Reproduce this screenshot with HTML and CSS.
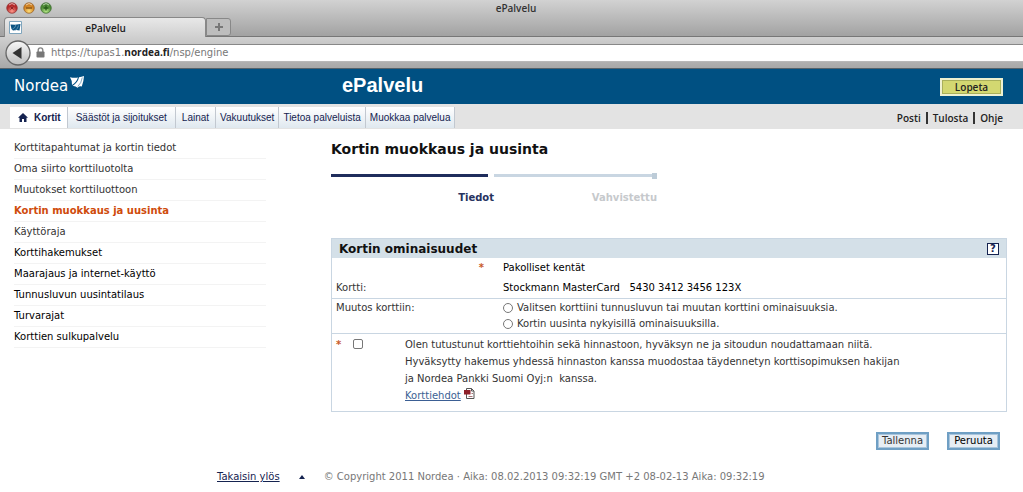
FILE: index.html
```html
<!DOCTYPE html>
<html lang="fi">
<head>
  <meta charset="UTF-8" />
  <meta name="viewport" content="width=device-width, initial-scale=1.0"/>
  <title>ePalvelu</title>
  <link rel="stylesheet" href="styles.css">
</head>
<body>

  <!-- Selainikkuna -->
  <div class="browser">
    <div class="titlebar">
      <svg class="lights" width="48" height="16" viewBox="0 0 48 16">
        <defs>
          <radialGradient id="red" cy="0.8"><stop offset="0" stop-color="#ff9a8c"/><stop offset="1" stop-color="#b52a2a"/></radialGradient>
          <radialGradient id="amber" cy="0.8"><stop offset="0" stop-color="#ffe07a"/><stop offset="1" stop-color="#cf8020"/></radialGradient>
          <radialGradient id="green" cy="0.8"><stop offset="0" stop-color="#b9e88a"/><stop offset="1" stop-color="#4c8a34"/></radialGradient>
        </defs>
        <circle cx="7" cy="8" r="5.3" fill="url(#red)" stroke="#8f3434" stroke-width="0.7"/>
        <circle cx="24" cy="8" r="5.3" fill="url(#amber)" stroke="#936029" stroke-width="0.7"/>
        <circle cx="41" cy="8" r="5.3" fill="url(#green)" stroke="#416d35" stroke-width="0.7"/>
        <path d="M5.500 6.500l3 3M8.500 6.500l-3 3" stroke="#8d2528"/>
        <path d="M21 8h6" stroke="#804b10" stroke-width="1.3"/>
        <path d="M38.500 8h5M41 5.500v5" stroke="#245a16" stroke-width="1.3"/>
        <path d="M4 5q3-3 6 0M21 5q3-3 6 0M38 5q3-3 6 0" fill="none" stroke="#fff" stroke-opacity="0.6"/>
      </svg>
      <span class="window-title">ePalvelu</span>
    </div>
    <div class="tabstrip">
      <div class="browser-tab">
        <svg width="13" height="13" viewBox="0 0 13 13">
          <path d="M0.500 0.500h12v12h-12z" fill="#fff" stroke="#7fa5bd"/>
          <path d="M1.500 3.500l4.500 0.200l5.500-0.700l-1 6.500l-3-0.500l-3.500 0.500l-1.500-1.500z" fill="#0b5382"/>
          <path d="M3.500 8q3-1 3.500-4.500M6 9.500q3-1.500 3.500-5" fill="none" stroke="#8fb8d0" stroke-width="0.6"/>
        </svg>
        <span>ePalvelu</span>
      </div>
      <button class="new-tab" type="button" aria-label="Uusi välilehti">
        <svg width="10" height="10" viewBox="0 0 10 10"><path d="M1 5h8M5 1v8" stroke="#777" stroke-width="2"/></svg>
      </button>
    </div>
    <div class="toolbar">
      <button class="back" type="button" aria-label="Takaisin">
        <svg width="26" height="26" viewBox="0 0 26 26">
          <defs><linearGradient id="metal" x2="0" y2="1"><stop offset="0" stop-color="#f8f8f8"/><stop offset="1" stop-color="#bdbdbd"/></linearGradient></defs>
          <circle cx="13" cy="13" r="12" fill="url(#metal)" stroke="#666" stroke-width="1.3"/>
          <path d="M7.500 13l9-6v12z" fill="#333"/>
        </svg>
      </button>
      <div class="address">
        <svg width="9" height="11" viewBox="0 0 9 11">
          <path d="M2.200 5V3.200a2.300 2.300 0 0 1 4.600 0V5" fill="none" stroke="#858585" stroke-width="1.400"/>
          <rect x="0.500" y="4.500" width="8" height="6" rx="0.800" fill="#777"/>
        </svg>
        <span>https://tupas1.<b>nordea.fi</b>/nsp/engine</span>
      </div>
    </div>
  </div>

  <header class="top">
    <div class="logo">
      <span>Nordea</span>
      <svg width="14" height="13" viewBox="0 0 14 13">
        <path d="M0 1.200q4 1 8 0.300q-1.500 4.500-6 7.500q0.500-4-2-7.800z" fill="#fff"/>
        <path d="M9 1.300q2.500-0.200 5-1.300q-0.300 5.500-2.200 10.500q-2.300-0.700-4.300 1.300q-2-2.200-5-1.800q5.500-3.500 6.500-8.700z" fill="#fff"/>
        <path d="M12.300 1.500q-0.800 5.500-4.500 9" fill="none" stroke="#005082" stroke-width="0.5"/>
      </svg>
    </div>
    <div class="service">ePalvelu</div>
    <button class="quit" type="button">Lopeta</button>
  </header>

  <nav class="main-nav">
    <a class="current" href="#">
      <svg width="10" height="9" viewBox="0 0 10 9"><path d="M5 0l5 4.800h-1.500V9H6V6H4v3H1.500V4.800H0z" fill="#152350"/></svg>
      Kortit
    </a>
    <a href="#">Säästöt ja sijoitukset</a>
    <a href="#">Lainat</a>
    <a href="#">Vakuutukset</a>
    <a href="#">Tietoa palveluista</a>
    <a href="#">Muokkaa palvelua</a>
    <div class="tools">
      <a href="#">Posti</a>
      <a href="#">Tulosta</a>
      <a href="#">Ohje</a>
    </div>
  </nav>

  <div class="page">
    <ul class="side">
      <li><a href="#">Korttitapahtumat ja kortin tiedot</a></li>
      <li><a href="#">Oma siirto korttiluotolta</a></li>
      <li><a href="#">Muutokset korttiluottoon</a></li>
      <li><a class="active" href="#">Kortin muokkaus ja uusinta</a></li>
      <li><a href="#">Käyttöraja</a></li>
      <li><a class="group" href="#">Korttihakemukset</a></li>
      <li><a class="group" href="#">Maarajaus ja internet-käyttö</a></li>
      <li><a class="group" href="#">Tunnusluvun uusintatilaus</a></li>
      <li><a class="group" href="#">Turvarajat</a></li>
      <li><a class="group" href="#">Korttien sulkupalvelu</a></li>
    </ul>

    <main>
      <h1>Kortin muokkaus ja uusinta</h1>
      <div class="steps">
        <span class="bar done"></span>
        <span class="bar last"></span>
        <span class="step done">Tiedot</span>
        <span class="step">Vahvistettu</span>
      </div>

      <form>
        <section class="panel">
          <div class="panel-head">
            <h2>Kortin ominaisuudet</h2>
            <button class="help" type="button">?</button>
          </div>
          <div class="row">
            <span class="star star-right">*</span>
            <span class="dark">Pakolliset kentät</span>
          </div>
          <div class="row">
            <span>Kortti:</span>
            <span class="dark">Stockmann MasterCard &nbsp; 5430 3412 3456 123X</span>
          </div>
          <div class="row choice">
            <span>Muutos korttiin:</span>
            <div>
              <label><input type="radio" name="muutos"> Valitsen korttiini tunnusluvun tai muutan korttini ominaisuuksia.</label>
              <label><input type="radio" name="muutos"> Kortin uusinta nykyisillä ominaisuuksilla.</label>
            </div>
          </div>
          <div class="terms">
            <span class="star">*</span>
            <input type="checkbox" id="ehdot">
            <div>
              <label for="ehdot">Olen tutustunut korttiehtoihin sekä hinnastoon, hyväksyn ne ja sitoudun noudattamaan niitä.<br>
              Hyväksytty hakemus yhdessä hinnaston kanssa muodostaa täydennetyn korttisopimuksen hakijan<br>
              ja Nordea Pankki Suomi Oyj:n &nbsp;kanssa.</label>
              <a href="#">Korttiehdot</a>
              <svg width="11" height="11" viewBox="0 0 11 11">
                <path d="M2.500 0.500h5l2.500 2.500v7.500h-7.500z" fill="#fff" stroke="#555"/>
                <path d="M7.500 0.500v2.500H10" fill="none" stroke="#555"/>
                <path d="M0 2h6.500v4.500H0z" fill="#8e2029"/>
                <path d="M4.500 8.500h4M7.500 5.500h1.500" fill="none" stroke="#a77478"/>
              </svg>
            </div>
          </div>
        </section>
        <div class="actions">
          <button type="button">Tallenna</button>
          <button class="strong" type="button">Peruuta</button>
        </div>
      </form>
    </main>
  </div>

  <footer>
    <a href="#">Takaisin ylös</a>
    <svg width="6" height="4" viewBox="0 0 6 4"><path d="M3 0l3 4H0z" fill="#152350"/></svg>
    <span>© Copyright 2011 Nordea · Aika: 08.02.2013 09:32:19 GMT +2 08-02-13 Aika: 09:32:19</span>
  </footer>

</body>
</html>
```

FILE: styles.css
```css
:root {
  --blue: #005082;
  --navy: #152350;
  --line: #c9d6e2;
}
* {
  box-sizing: border-box;
}
body {
  margin: 0;
  font-family: Verdana, "DejaVu Sans", sans-serif;
  font-size: 10px;
  line-height: 16px;
  color: #333;
  background: #fff;
}
button {
  font-family: inherit;
  font-size: 10px;
  padding: 0;
}
svg {
  flex: none;
}

/* Selain */
.browser {
  font-family: "Open Sans", sans-serif;
  background: linear-gradient(#d2d2d2, #a2a2a2 36px, #a2a2a2);
  border-bottom: 1px solid #56626a;
}
.titlebar {
  display: grid;
  grid-template-columns: 48px 1fr 44px;
  height: 17px;
  padding-left: 5px;
  color: #333;
}
.window-title {
  text-align: center;
  font-weight: 600;
}
.tabstrip {
  display: flex;
  height: 20px;
  border-bottom: 1px solid #777;
}
.browser-tab {
  display: flex;
  align-items: center;
  width: 202px;
  height: 20px;
  margin-left: 4px;
  padding-left: 4px;
  border: 1px solid #888;
  border-bottom: 0;
  border-radius: 4px 4px 0 0;
  background: linear-gradient(#e8e8e8, #d0d0d0);
  color: #222;
  font-weight: 600;
}
.browser-tab span {
  flex: 1;
  padding-right: 16px;
  text-align: center;
}
.new-tab {
  display: flex;
  align-items: center;
  justify-content: center;
  width: 25px;
  height: 18px;
  margin-top: 1px;
  border: 1px solid #888;
  border-radius: 0 3px 3px 0;
  background: #bdbdbd;
}
.toolbar {
  display: flex;
  align-items: center;
  height: 31px;
  padding-left: 5px;
  background: linear-gradient(#d0d0d0, #a8a8a8);
}
.back {
  z-index: 1;
  height: 26px;
  border: 0;
  background: none;
}
.address {
  flex: 1;
  display: flex;
  align-items: center;
  gap: 6px;
  height: 18px;
  margin-left: -8px;
  padding-left: 13px;
  border-top: 1px solid #888;
  border-bottom: 1px solid #b8b8b8;
  background: #fff;
  color: #777;
  font-family: "DejaVu Sans", sans-serif;
}
.address b {
  color: #222;
  font-family: "Open Sans", sans-serif;
}

/* Yläpalkki */
.top {
  display: grid;
  grid-template-columns: 328px 1fr auto;
  align-items: center;
  height: 35px;
  padding: 0 20px 0 14px;
  background: var(--blue);
  color: #fff;
}
.logo {
  display: flex;
  align-items: flex-start;
  gap: 2px;
  padding-bottom: 2px;
  font-family: "DejaVu Sans", sans-serif;
  font-size: 15px;
  line-height: 20px;
}
.service {
  padding-bottom: 2px;
  font: bold 20px "Liberation Sans", Arial, sans-serif;
}
.quit {
  width: 63px;
  height: 18px;
  border: 2px solid #eef1d0;
  outline: 1px solid #a9b05a;
  outline-offset: -3px;
  background: #d3d871;
  color: #222;
  font-weight: 600;
  line-height: 12px;
  font-family: "Open Sans", sans-serif;
}

/* Välilehdet */
.main-nav {
  display: flex;
  align-items: flex-end;
  height: 25px;
  padding: 0 20px 1px 10px;
  background: #e3e3e3;
  font-family: "Liberation Sans", Arial, sans-serif;
}
.main-nav > a {
  height: 21px;
  padding: 0 4px;
  border-right: 1px solid #c2c8d0;
  background: linear-gradient(#fff, #dfe8ef);
  color: var(--navy);
  line-height: 21px;
  text-decoration: none;
}
.main-nav > a:nth-child(2) {
  padding: 0 8px;
}
.main-nav > a:nth-child(3) {
  padding: 0 6px;
}
.main-nav > .current {
  display: flex;
  align-items: center;
  gap: 6px;
  padding: 0 6px 0 8px;
  background: #fff;
  font-weight: bold;
}
.tools {
  display: flex;
  align-items: center;
  height: 21px;
  margin-left: auto;
  font-family: "Open Sans", sans-serif;
  font-weight: 600;
}
.tools a {
  color: #222;
  line-height: 12px;
  text-decoration: none;
}
.tools a + a {
  margin-left: 5px;
  padding-left: 5px;
  border-left: 2px solid #333;
}

/* Sisältö */
.page {
  display: grid;
  grid-template-columns: 252px 1fr;
  gap: 65px;
  padding: 9px 16px 0 14px;
}
.side {
  margin: 0;
  padding: 0;
  list-style: none;
}
.side li {
  height: 21px;
  border-bottom: 1px solid #f3f3f3;
  line-height: 20px;
}
.side a {
  color: #333;
  text-decoration: none;
}
.side .group {
  color: #000;
}
.side .active {
  color: #cf4b0b;
  font-weight: bold;
}
h1 {
  margin: 0;
  color: #111;
  font-size: 14px;
  line-height: 22px;
}
.steps {
  display: grid;
  grid-template-columns: 157px 163px;
  column-gap: 6px;
  margin: 14px 0 32px;
}
.bar {
  position: relative;
  height: 3px;
  margin-bottom: 13px;
  background: var(--line);
}
.bar.done {
  background: #1f2d5c;
}
.bar.last::after {
  content: "";
  position: absolute;
  top: -1px;
  right: 0;
  width: 5px;
  height: 6px;
  background: #bdccd8;
}
.step {
  color: #c6c9cc;
  font-weight: bold;
  text-align: right;
}
.step.done {
  margin-right: -6px;
  color: #27335f;
}
.panel {
  border: 1px solid var(--line);
}
.panel-head {
  display: flex;
  align-items: center;
  justify-content: space-between;
  height: 19px;
  padding: 0 7px;
  background: #d4e0e8;
}
h2 {
  margin: 0;
  color: #111;
  font-size: 12px;
}
.help {
  width: 12px;
  height: 12px;
  border: 1px solid var(--navy);
  background: #fff;
  color: var(--navy);
  font-weight: bold;
  line-height: 10px;
}
.row {
  display: grid;
  grid-template-columns: 167px 1fr;
  padding: 2px 4px;
}
.star {
  color: #c85a28;
  font-weight: bold;
}
.star-right {
  padding-right: 19px;
  text-align: right;
}
.dark {
  color: #000;
}
.choice {
  padding: 1px 4px;
  border-top: 1px solid var(--line);
}
.choice label {
  display: flex;
  align-items: center;
  gap: 4px;
}
input {
  appearance: none;
  width: 10px;
  height: 10px;
  margin: 0;
  border: 1px solid #777;
  background: #fff;
}
input[type=radio] {
  border-radius: 50%;
}
input[type=checkbox] {
  margin-top: 3px;
  border-radius: 2px;
}
input:checked {
  background: var(--navy);
}
.terms {
  display: grid;
  grid-template-columns: 17px 52px 1fr;
  padding: 2px 4px 7px;
  border-top: 1px solid var(--line);
  line-height: 17px;
}
.terms label {
  display: block;
}
.terms a {
  color: #3b5f94;
}
.actions {
  display: flex;
  justify-content: flex-end;
  gap: 18px;
  padding: 20px 7px 0 0;
}
.actions button {
  width: 53px;
  height: 18px;
  border: 2px solid #6f9fc4;
  outline: 1px solid #a9c5dc;
  outline-offset: -3px;
  background: #e6edf4;
  color: #333;
  line-height: 12px;
}
.actions .strong {
  color: #000;
}
footer {
  display: flex;
  align-items: center;
  gap: 19px;
  padding: 19px 0 6px 217px;
  color: #777;
}
footer a {
  color: var(--navy);
}
```
